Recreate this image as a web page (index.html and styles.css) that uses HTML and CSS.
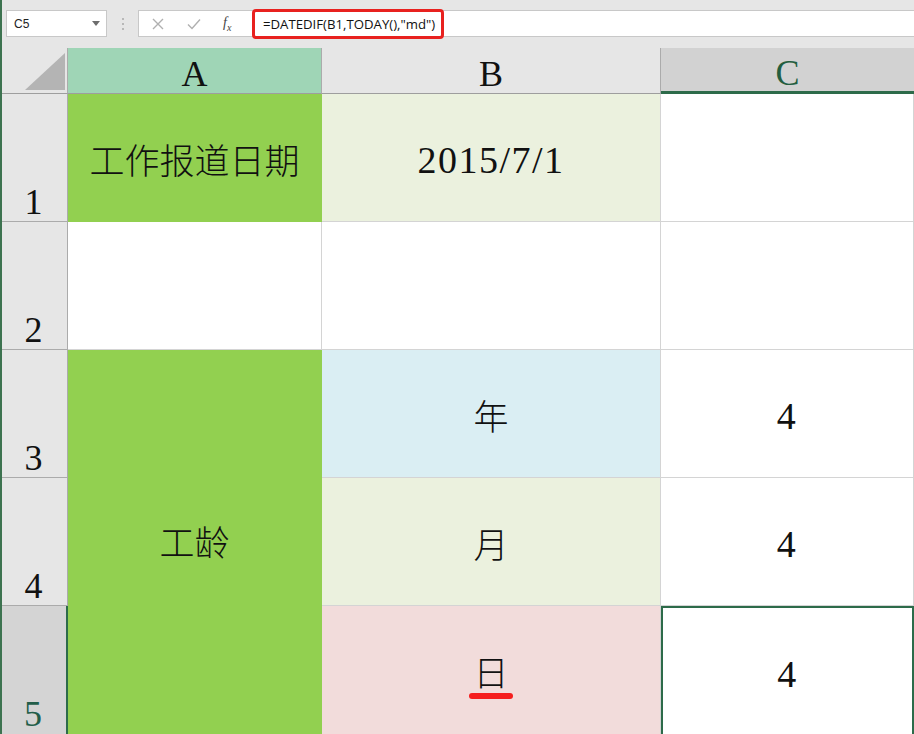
FILE: index.html
```html
<!DOCTYPE html>
<html lang="zh-CN">
<head>
  <meta charset="UTF-8">
  <title>Excel DATEDIF</title>
  <link rel="stylesheet" href="styles.css">
</head>
<body>
  <div class="app">
    <div class="formula-bar">
      <div class="name-box">
        <span>C5</span>
        <svg class="caret" width="8" height="5" viewBox="0 0 8 5"><path d="M0 0h8L4 5z" fill="#6d6d6d"/></svg>
      </div>
      <div class="grip"><i></i><i></i><i></i></div>
      <div class="tools">
        <svg width="12" height="12" viewBox="0 0 12 12"><path d="M1 1l10 10M11 1L1 11" stroke="#b0b0b0" stroke-width="1.4"/></svg>
        <svg width="14" height="12" viewBox="0 0 14 12"><path d="M1 6.5l4 4L13 1.5" stroke="#b0b0b0" stroke-width="1.4" fill="none"/></svg>
        <span class="fx">f<sub>x</sub></span>
      </div>
      <div class="formula">
        <span class="formula-text">=DATEDIF(B1,TODAY(),"md")</span>
      </div>
    </div>

    <div class="sheet">
      <div class="corner">
        <svg width="68" height="46" viewBox="0 0 68 46"><path d="M25 42H65V5z" fill="#b4b4b4"/></svg>
      </div>
      <div class="col-head col-a">A</div>
      <div class="col-head">B</div>
      <div class="col-head active">C</div>

      <div class="row-head">1</div>
      <div class="cell green cjk">工作报道日期</div>
      <div class="cell olive num">2015/7/1</div>
      <div class="cell"></div>

      <div class="row-head">2</div>
      <div class="cell"></div>
      <div class="cell"></div>
      <div class="cell"></div>

      <div class="row-head">3</div>
      <div class="cell green cjk merged">工龄</div>
      <div class="cell blue cjk">年</div>
      <div class="cell num">4</div>

      <div class="row-head">4</div>
      <div class="cell olive cjk">月</div>
      <div class="cell num">4</div>

      <div class="row-head active">5</div>
      <div class="cell pink cjk"><span class="marked">日</span></div>
      <div class="cell num selected">4</div>
    </div>
  </div>
</body>
</html>
```

FILE: styles.css
```css
* {
  box-sizing: border-box;
}

body {
  margin: 0;
  background: #e6e6e6;
  font-family: "Liberation Sans", Arial, sans-serif;
}

.app {
  width: 914px;
  height: 734px;
  overflow: hidden;
  border-left: 2px solid #3d7350;
}

/* formula bar */
.formula-bar {
  height: 48px;
  display: flex;
  align-items: center;
  padding: 0 0 1px 4px;
  background: #e6e6e6;
}

.name-box {
  width: 101px;
  height: 27px;
  background: #fff;
  border: 1px solid #c8c8c8;
  display: flex;
  align-items: center;
  justify-content: space-between;
  padding: 0 6px 0 7px;
  font-size: 12px;
  color: #222;
}

.grip {
  width: 31px;
  display: flex;
  flex-direction: column;
  align-items: center;
  gap: 3px;
}

.grip i {
  width: 2px;
  height: 2px;
  background: #b8b8b8;
}

.tools {
  width: 110px;
  height: 27px;
  background: #fff;
  border: 1px solid #c8c8c8;
  border-right: none;
  display: flex;
  align-items: center;
  gap: 23px;
  padding-left: 13px;
}

.fx {
  font-family: "Liberation Serif", serif;
  font-style: italic;
  font-size: 14px;
  color: #444;
  margin-left: -1px;
}

.fx sub {
  font-size: 10px;
}

.formula {
  flex: 1;
  height: 27px;
  background: #fff;
  border-top: 1px solid #c8c8c8;
  border-bottom: 1px solid #c8c8c8;
  display: flex;
  align-items: center;
  padding-left: 4px;
}

.formula-text {
  height: 30px;
  display: flex;
  align-items: center;
  padding: 0 6px 0 8px;
  border: 3px solid #e8211f;
  border-radius: 4px;
  font-family: "Open Sans", "Liberation Sans", sans-serif;
  font-size: 13.2px;
  color: #111;
}

/* sheet grid */
.sheet {
  display: grid;
  grid-template-columns: 66px 254px 339px 253px;
  grid-template-rows: 46px repeat(5, 128px);
  background: #fff;
}

.corner {
  background: #e6e6e6;
  border-right: 1px solid #ababab;
  border-bottom: 1px solid #9e9e9e;
  margin-left: -2px;
}

.corner svg {
  display: block;
}

.col-head {
  background: #e6e6e6;
  border-right: 1px solid #ababab;
  border-bottom: 1px solid #9e9e9e;
  display: flex;
  align-items: center;
  justify-content: center;
  padding-top: 6px;
  font-family: "Liberation Serif", serif;
  font-size: 36px;
  color: #111;
}

.col-head.col-a {
  background: #9fd5b6;
}

.col-head.active {
  background: #d2d2d2;
  color: #235e3f;
  border-bottom: 3px solid #2d6b4a;
  border-right: none;
}

.row-head {
  background: #e6e6e6;
  border-right: 1px solid #ababab;
  border-bottom: 1px solid #ababab;
  display: flex;
  align-items: flex-end;
  justify-content: center;
  padding: 0 2px 3px 0;
  font-family: "Liberation Serif", serif;
  font-size: 36px;
  line-height: 32px;
  color: #111;
}

.row-head.active {
  background: #d4d4d4;
  color: #235e4a;
  border-right: 2px solid #2d6b4a;
  border-bottom: none;
  padding-bottom: 4px;
}

.cell {
  border-right: 1px solid #d4d4d4;
  border-bottom: 1px solid #d4d4d4;
  display: flex;
  align-items: center;
  justify-content: center;
  color: #111;
}

.cell.merged {
  grid-row: span 3;
  padding-bottom: 4px;
}

.cjk {
  font-family: "Noto Sans CJK SC", sans-serif;
  font-size: 35px;
  font-weight: 300;
  padding-top: 2px;
}

.num {
  font-family: "Liberation Serif", serif;
  font-size: 38px;
  letter-spacing: 1.5px;
  padding-top: 4px;
}

.green {
  background: #92d050;
  border-right-color: #92d050;
  border-bottom-color: #92d050;
}

.olive {
  background: #ebf1de;
}

.blue {
  background: #daeef3;
}

.pink {
  background: #f2dcdb;
  border-bottom: none;
}

.selected {
  border: 2px solid #2d6b4a;
  border-bottom: none;
  padding-top: 6px;
}

.marked {
  position: relative;
  margin-top: -2px;
}

.marked::after {
  content: "";
  position: absolute;
  left: -4px;
  right: -4px;
  bottom: -3px;
  height: 6px;
  border-radius: 3px;
  background: #f51e1e;
}
```
